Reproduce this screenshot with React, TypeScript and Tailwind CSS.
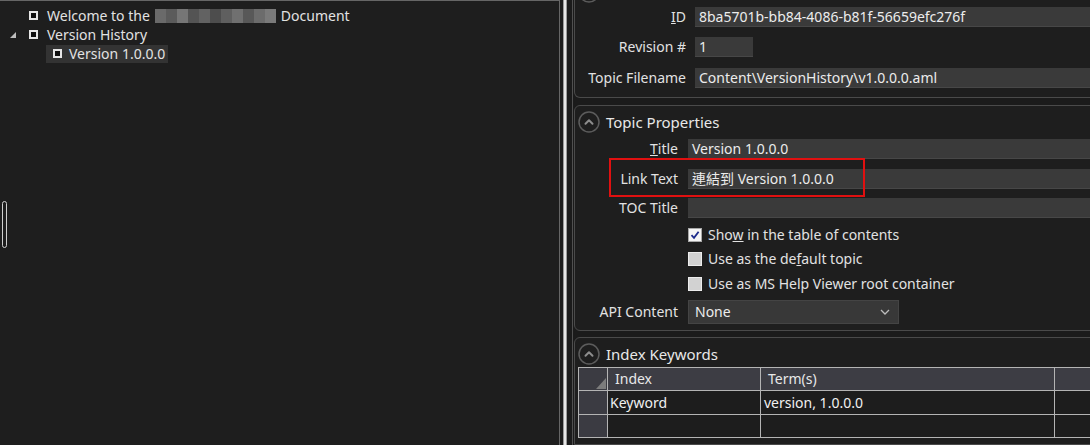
import React from "react";

function TreeBox() {
  return <div className="w-[9px] h-[9px] border-2 border-[#e6e6e6] bg-[#0e0e0e] shrink-0" />;
}

function CircleIcon() {
  return (
    <svg width="22" height="22" viewBox="0 0 22 22" className="shrink-0">
      <circle cx="11" cy="11" r="10" fill="none" stroke="#5c5c5c" strokeWidth="1.5" />
      <path d="M7.5 12.8 L11 9.3 L14.5 12.8" fill="none" stroke="#8c8c8c" strokeWidth="2" strokeLinecap="round" strokeLinejoin="round" />
    </svg>
  );
}

function Field({ children, className = "" }: { children?: React.ReactNode; className?: string }) {
  return (
    <div className={"h-[20px] bg-[#3a3a3a] border-b border-[#474747] px-[4px] leading-[19px] text-[#ececec] whitespace-nowrap overflow-hidden " + className}>
      {children}
    </div>
  );
}

function Check({ checked }: { checked?: boolean }) {
  if (checked) {
    return (
      <div className="w-[14px] h-[14px] bg-[#f4f4f4] border border-[#a8a8a8] flex items-center justify-center shrink-0">
        <svg width="10" height="10" viewBox="0 0 10 10">
          <path d="M1.5 5.2 L4 7.8 L8.6 1.8" fill="none" stroke="#1b2a8a" strokeWidth="1.8" />
        </svg>
      </div>
    );
  }
  return <div className="w-[14px] h-[14px] bg-[#d2d2d2] border border-[#ececec] shrink-0" />;
}

const mosaic = ["#6a6a6a", "#5b5b5b", "#767676", "#545454", "#626262", "#4d4d4d", "#5f5f5f", "#707070", "#585858", "#6c6c6c", "#7a7a7a"];

function Row({ label, children, cols, pr, className = "" }: { label: React.ReactNode; children: React.ReactNode; cols: string; pr: string; className?: string }) {
  return (
    <div className={"grid items-center h-[20px] " + cols + " " + className}>
      <div className={"text-right h-[20px] leading-[20px] whitespace-nowrap " + pr}>{label}</div>
      {children}
    </div>
  );
}

export default function App() {
  return (
    <div className="flex w-[1090px] h-[445px] overflow-hidden bg-[#1b1b1b] text-[14px] leading-[20px] text-[#e2e2e2] font-['Noto_Sans','Noto_Sans_CJK_TC',sans-serif]">
      {/* Left tree panel */}
      <div className="relative w-[560px] h-full shrink-0 bg-[#1e1e1e] border-t border-r border-[#666666] pt-[5px]">
        <div className="flex items-center h-[19px] pl-[29px] whitespace-nowrap">
          <TreeBox />
          <span className="ml-[9px]">Welcome to the</span>
          <div className="ml-[5px] flex h-[14px]">
            {mosaic.map((c, i) => (
              <div key={i} className="w-[11px] h-full" style={{ backgroundColor: c }} />
            ))}
          </div>
          <span className="ml-[5px]">Document</span>
        </div>
        <div className="flex items-center h-[19px] pl-[10px] whitespace-nowrap">
          <svg width="6" height="6" viewBox="0 0 6 6" className="shrink-0">
            <polygon points="6,0 6,6 0,6" fill="#bdbdbd" />
          </svg>
          <div className="ml-[13px]"><TreeBox /></div>
          <span className="ml-[9px]">Version History</span>
        </div>
        <div className="flex items-center h-[19px] pl-[46px] whitespace-nowrap">
          <div className="flex items-center h-[18px] bg-[#333333] pl-[7px] pr-[3px]">
            <TreeBox />
            <span className="ml-[7px]">Version 1.0.0.0</span>
          </div>
        </div>
        <div className="absolute left-[2px] top-[200px] w-[5px] h-[47px] rounded-[3px] border border-[#cfcfcf]" />
      </div>

      {/* Splitter */}
      <div className="w-[3px] shrink-0" />
      <div className="w-[4px] shrink-0 bg-[#e6e6e6] border-x border-[#9a9a9a]" />
      <div className="w-[5px] shrink-0" />
      <div className="w-px shrink-0 bg-[#505050]" />

      {/* Right properties */}
      <div className="flex-1 overflow-hidden flex flex-col">
        {/* Section 1 */}
        <div className="w-[560px] ml-px border border-t-0 border-[#4a4a4a] rounded-b-[6px] bg-[#1e1e1e] shrink-0">
          <div className="h-[3px] overflow-hidden flex flex-col justify-end pl-[3px]">
            <CircleIcon />
          </div>
          <div className="pt-[4px] pb-[9px] flex flex-col">
            <Row cols="grid-cols-[120px_1fr]" pr="pr-[9px]" label={<><u>I</u>D</>}>
              <Field>8ba5701b-bb84-4086-b81f-56659efc276f</Field>
            </Row>
            <Row cols="grid-cols-[120px_1fr]" pr="pr-[9px]" label="Revision #" className="mt-[10px]">
              <Field className="w-[58px]">1</Field>
            </Row>
            <Row cols="grid-cols-[120px_1fr]" pr="pr-[9px]" label="Topic Filename" className="mt-[11px]">
              <Field>Content\VersionHistory\v1.0.0.0.aml</Field>
            </Row>
          </div>
        </div>

        {/* Section 2: Topic Properties */}
        <div className="w-[560px] ml-px mt-[7px] border border-[#4a4a4a] rounded-[6px] bg-[#1e1e1e] shrink-0 pt-[5px] pb-[6px]">
          <div className="flex items-center h-[22px] pl-[3px] gap-[6px]">
            <CircleIcon />
            <span className="text-[15px] leading-[22px] text-[#e8e8e8]">Topic Properties</span>
          </div>
          <Row cols="grid-cols-[113px_1fr]" pr="pr-[10px]" label={<><u>T</u>itle</>} className="mt-[6px]">
            <Field>Version 1.0.0.0</Field>
          </Row>
          <div className="relative mt-[10px]">
            <Row cols="grid-cols-[113px_1fr]" pr="pr-[10px]" label="Link Text">
              <Field>連結到 Version 1.0.0.0</Field>
            </Row>
            <div className="absolute left-[34px] top-[-11px] w-[256px] h-[39px] border-2 border-[#e01010]" />
          </div>
          <Row cols="grid-cols-[113px_1fr]" pr="pr-[10px]" label="TOC Title" className="mt-[9px]">
            <Field />
          </Row>
          <div className="flex items-center h-[20px] pl-[113px] mt-[7px] gap-[6px]">
            <Check checked />
            <span>Sho<u>w</u> in the table of contents</span>
          </div>
          <div className="flex items-center h-[20px] pl-[113px] mt-[4px] gap-[6px]">
            <Check />
            <span>Use as the de<u>f</u>ault topic</span>
          </div>
          <div className="flex items-center h-[20px] pl-[113px] mt-[5px] gap-[6px]">
            <Check />
            <span>Use as MS Help Viewer root container</span>
          </div>
          <div className="grid grid-cols-[113px_1fr] items-center h-[24px] mt-[6px]">
            <div className="text-right pr-[10px]">API Content</div>
            <div className="w-[211px] h-[24px] bg-[#383838] border border-[#444444] flex items-center justify-between pl-[6px] pr-[8px] text-[#ececec]">
              <span>None</span>
              <svg width="10" height="6" viewBox="0 0 10 6">
                <path d="M1 1 L5 5 L9 1" fill="none" stroke="#bdbdbd" strokeWidth="1.3" />
              </svg>
            </div>
          </div>
        </div>

        {/* Section 3: Index Keywords */}
        <div className="w-[560px] ml-px mt-[6px] border border-[#4a4a4a] rounded-t-[6px] bg-[#1e1e1e] flex-1 pt-[5px]">
          <div className="flex items-center h-[22px] pl-[3px] gap-[6px]">
            <CircleIcon />
            <span className="text-[15px] leading-[22px] text-[#e8e8e8]">Index Keywords</span>
          </div>
          <div className="ml-[3px] mt-[2px] grid grid-cols-[28px_152px_293px_120px] grid-rows-[22px_23px_22px] gap-px bg-[#b4b4b4] p-px w-max">
            <div className="relative bg-[#3b3b42]">
              <svg width="10" height="11" viewBox="0 0 10 11" className="absolute right-[1px] bottom-[1px]">
                <polygon points="10,0 10,11 0,11" fill="#7c7c7c" />
              </svg>
            </div>
            <div className="bg-[#3d3d44] pl-[7px] leading-[22px] text-[#e8e8e8]">Index</div>
            <div className="bg-[#3d3d44] pl-[7px] leading-[22px] text-[#e8e8e8]">Term(s)</div>
            <div className="bg-[#3d3d44]" />

            <div className="bg-[#3b3b42]" />
            <div className="bg-[#1d1d1d] pl-[2px] leading-[23px] text-[#f0f0f0]">Keyword</div>
            <div className="bg-[#1d1d1d] pl-[3px] leading-[23px] text-[#f0f0f0]">version, 1.0.0.0</div>
            <div className="bg-[#1d1d1d]" />

            <div className="bg-[#3b3b42]" />
            <div className="bg-[#1d1d1d]" />
            <div className="bg-[#1d1d1d]" />
            <div className="bg-[#1d1d1d]" />
          </div>
        </div>
      </div>
    </div>
  );
}
